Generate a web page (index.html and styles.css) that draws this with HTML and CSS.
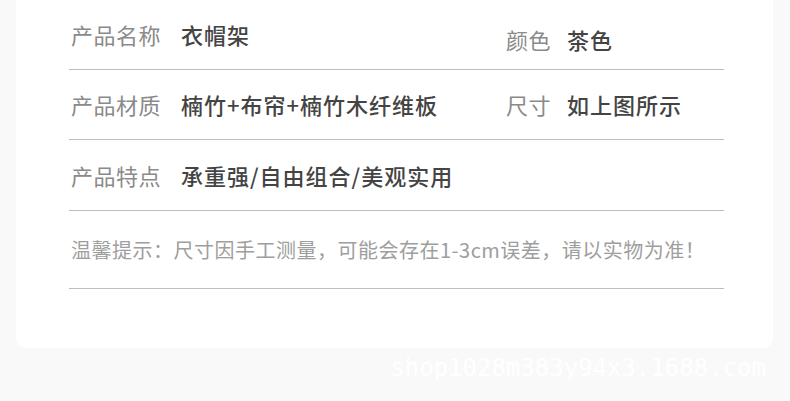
FILE: index.html
```html
<!DOCTYPE html>
<html lang="zh-CN">
<head>
    <meta charset="UTF-8">
    <meta name="viewport" content="width=device-width, initial-scale=1.0">
    <title>产品参数</title>
    <link rel="stylesheet" href="styles.css">
</head>
<body>

<div class="card">
    <!-- Product spec table -->
    <div class="spec-row row-1">
        <span class="label">产品名称</span>
        <span class="value">衣帽架</span>
        <span class="label side low">颜色</span>
        <span class="value low">茶色</span>
    </div>
    <div class="spec-row row-2">
        <span class="label">产品材质</span>
        <span class="value">楠竹+布帘+楠竹木纤维板</span>
        <span class="label side">尺寸</span>
        <span class="value">如上图所示</span>
    </div>
    <div class="spec-row row-3">
        <span class="label">产品特点</span>
        <span class="value">承重强/自由组合/美观实用</span>
    </div>
    <div class="note">温馨提示：尺寸因手工测量，可能会存在1-3cm误差，请以实物为准！</div>
</div>

<div class="watermark">shop1028m383y94x3.1688.com</div>

</body>
</html>
```

FILE: styles.css
```css
body {
    margin: 0;
    padding: 0;
    background-color: #f9f9f9;
    font-family: "Noto Sans CJK SC", "Noto Sans", sans-serif;
}

.card {
    margin-left: 16px;
    width: 704px;
    height: 348px;
    padding: 0 0 0 53px;
    background-color: #fff;
    border-radius: 0 0 10px 10px;
}

.spec-row {
    width: 653px;
    padding-left: 2px;
    display: grid;
    grid-template-columns: 110px 325px 61px 1fr;
    align-items: start;
    border-bottom: 1px solid #bdbdbd;
    line-height: 30px;
}

.row-1 {
    height: 50px;
    padding-top: 19px;
}

.row-2 {
    height: 50px;
    padding-top: 19px;
}

.row-3 {
    height: 50px;
    padding-top: 20px;
}

.label {
    font-size: 22px;
    letter-spacing: 0.5px;
    color: #8a8a8a;
}

.value {
    font-size: 22px;
    letter-spacing: 1px;
    font-weight: 500;
    color: #444;
}

/* the colour cell sits a little lower than the rest */
.low {
    margin-top: 5px;
}

.note {
    width: 653px;
    height: 53px;
    padding: 24px 0 0 2px;
    border-bottom: 1px solid #bdbdbd;
    font-size: 20px;
    letter-spacing: 0.5px;
    line-height: 30px;
    color: #9e9e9e;
}

.watermark {
    margin-top: 8px;
    padding-right: 24px;
    text-align: right;
    font-family: "DejaVu Sans Mono", monospace;
    font-size: 24px;
    line-height: 24px;
    color: #fff;
}
```
